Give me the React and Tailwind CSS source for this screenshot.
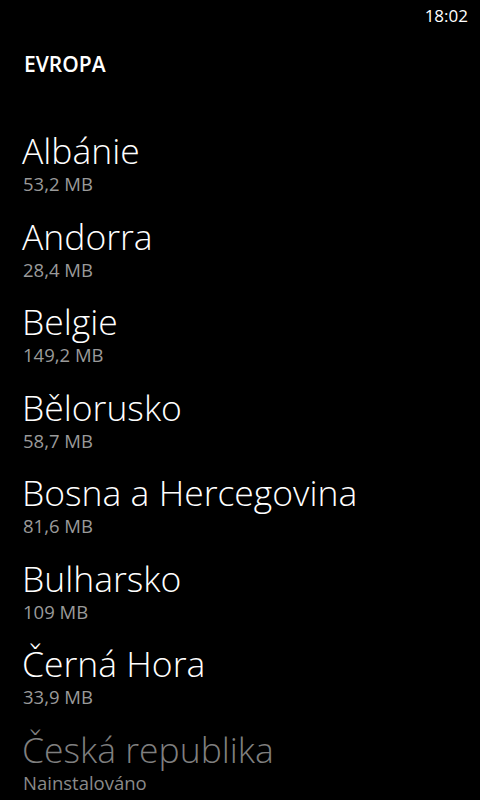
const countries = [
  { name: "Albánie", size: "53,2 MB" },
  { name: "Andorra", size: "28,4 MB" },
  { name: "Belgie", size: "149,2 MB" },
  { name: "Bělorusko", size: "58,7 MB" },
  { name: "Bosna a Hercegovina", size: "81,6 MB" },
  { name: "Bulharsko", size: "109 MB" },
  { name: "Černá Hora", size: "33,9 MB" },
  { name: "Česká republika", size: "Nainstalováno", installed: true },
];

export default function App() {
  return (
    <div className="h-[800px] w-[480px] overflow-hidden bg-black font-['Open_Sans',sans-serif] text-white">
      {/* status bar */}
      <div className="flex justify-end pr-[12px] pt-[4px]">
        <span className="text-[17px] leading-[24px]">18:02</span>
      </div>

      <h1 className="mt-[22px] pl-[24px] text-[21px] font-semibold leading-[28px]">EVROPA</h1>

      <ul className="mt-[50px] flex flex-col pl-[22px]">
        {countries.map((c) => (
          <li key={c.name} className="h-[85.5px]">
            <p
              className={
                c.installed
                  ? "text-[35.5px] font-[350] leading-[44px] text-[#7f7f7f]"
                  : "text-[35.5px] font-[350] leading-[44px] text-white"
              }
            >
              {c.name}
            </p>
            <p
              className={
                c.installed
                  ? "pl-[1px] text-[18.5px] leading-[24px] text-[#8a8a8a]"
                  : "pl-[1px] text-[18.5px] leading-[24px] text-[#9a9a9a]"
              }
            >
              {c.size}
            </p>
          </li>
        ))}
      </ul>
    </div>
  );
}
